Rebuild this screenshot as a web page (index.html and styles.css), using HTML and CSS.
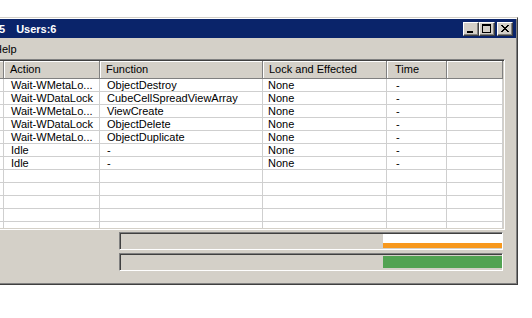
FILE: index.html
```html
<!DOCTYPE html>
<html lang="en">
<head>
    <meta charset="UTF-8">
    <title>Users:6</title>
    <link rel="stylesheet" href="styles.css">
</head>
<body>
    <div class="window">
        <div class="titlebar">
            <span class="title-count">5</span>
            <span class="title-users">Users:6</span>
            <div class="caption-buttons">
                <div class="cap-btn">
                    <svg width="14" height="12" viewBox="0 0 14 12" shape-rendering="crispEdges">
                        <rect x="3" y="8" width="6" height="2" fill="#000"/>
                    </svg>
                </div>
                <div class="cap-btn">
                    <svg width="14" height="12" viewBox="0 0 14 12" shape-rendering="crispEdges">
                        <path d="M2 1h9v9h-9z M3 3v6h7v-6z" fill="#000" fill-rule="evenodd"/>
                    </svg>
                </div>
                <div class="cap-btn cap-close">
                    <svg width="14" height="12" viewBox="0 0 14 12" shape-rendering="crispEdges">
                        <path d="M3 2h2v1h1v1h2v-1h1v-1h2v1h-1v1h-1v1h-1v1h1v1h1v1h1v1h-2v-1h-1v-1h-2v1h-1v1h-2v-1h1v-1h1v-1h1v-1h-1v-1h-1v-1h-1z" fill="#000"/>
                    </svg>
                </div>
            </div>
        </div>

        <div class="menubar">
            <span class="menu-item">Help</span>
        </div>

        <div class="listview">
            <div class="lv-header">
                <div class="lv-col"></div>
                <div class="lv-col">Action</div>
                <div class="lv-col">Function</div>
                <div class="lv-col">Lock and Effected</div>
                <div class="lv-col col-time">Time</div>
                <div class="lv-col"></div>
            </div>
            <div class="lv-body">
                <div class="lv-row"><div></div><div>Wait-WMetaLo...</div><div>ObjectDestroy</div><div>None</div><div class="col-time">-</div><div></div></div>
                <div class="lv-row"><div></div><div>Wait-WDataLock</div><div>CubeCellSpreadViewArray</div><div>None</div><div class="col-time">-</div><div></div></div>
                <div class="lv-row"><div></div><div>Wait-WMetaLo...</div><div>ViewCreate</div><div>None</div><div class="col-time">-</div><div></div></div>
                <div class="lv-row"><div></div><div>Wait-WDataLock</div><div>ObjectDelete</div><div>None</div><div class="col-time">-</div><div></div></div>
                <div class="lv-row"><div></div><div>Wait-WMetaLo...</div><div>ObjectDuplicate</div><div>None</div><div class="col-time">-</div><div></div></div>
                <div class="lv-row"><div></div><div>Idle</div><div>-</div><div>None</div><div class="col-time">-</div><div></div></div>
                <div class="lv-row"><div></div><div>Idle</div><div>-</div><div>None</div><div class="col-time">-</div><div></div></div>
                <div class="lv-row"><div></div><div></div><div></div><div></div><div></div><div></div></div>
                <div class="lv-row"><div></div><div></div><div></div><div></div><div></div><div></div></div>
                <div class="lv-row"><div></div><div></div><div></div><div></div><div></div><div></div></div>
                <div class="lv-row"><div></div><div></div><div></div><div></div><div></div><div></div></div>
                <div class="lv-row"><div></div><div></div><div></div><div></div><div></div><div></div></div>
            </div>
        </div>

        <div class="statusbar">
            <div class="meter meter-load"><div class="meter-fill"></div></div>
            <div class="meter meter-ok"><div class="meter-fill"></div></div>
        </div>
    </div>
</body>
</html>
```

FILE: styles.css
```css
body {
    margin: 0;
    background: #fff;
    font-family: "Liberation Sans", Arial, sans-serif;
    font-size: 11px;
    color: #000;
    overflow: hidden;
}

.window {
    box-sizing: border-box;
    width: 558px;
    height: 268px;
    margin: 17px 0 0 -40px;
    padding: 1px;
    background: #d4d0c8;
    border: 1px solid;
    border-color: #d4d0c8 #404040 #404040 #d4d0c8;
    box-shadow: inset 1px 1px #fff, inset -1px -1px #808080;
    display: flex;
    flex-direction: column;
}

/* title bar */
.titlebar {
    height: 19px;
    flex: none;
    display: flex;
    align-items: center;
    padding-left: 37px;
    background: #0a246a;
    color: #fff;
    font-weight: bold;
}

.title-users {
    margin-left: 11px;
}

.caption-buttons {
    margin-left: auto;
    margin-right: 3px;
    display: flex;
}

.cap-btn {
    box-sizing: border-box;
    width: 16px;
    height: 14px;
    background: #d4d0c8;
    border: 1px solid;
    border-color: #fff #404040 #404040 #fff;
    box-shadow: inset -1px -1px #808080;
}

.cap-btn svg {
    display: block;
}

.cap-close {
    margin-left: 2px;
}

/* menu */
.menubar {
    height: 21px;
    flex: none;
    display: flex;
    align-items: center;
    padding-left: 32px;
}

/* list view */
.listview {
    box-sizing: border-box;
    width: 543px;
    height: 171px;
    flex: none;
    padding: 1px;
    border: 1px solid;
    border-color: #808080 #fff #fff #808080;
    box-shadow: inset 1px 1px #404040, inset -1px -1px #d4d0c8;
    background: #fff;
}

.lv-header,
.lv-row {
    display: grid;
    grid-template-columns: 40px 96px 163px 124px 60px 56px;
}

.lv-header {
    height: 18px;
    background: #d4d0c8;
}

.lv-col {
    box-sizing: border-box;
    padding-left: 6px;
    line-height: 16px;
    border-right: 1px solid #808080;
    border-bottom: 1px solid #808080;
    box-shadow: inset 1px 1px #fff;
    white-space: nowrap;
}

.lv-header .col-time {
    padding-left: 8px;
}

.lv-body {
    height: 149px;
    overflow: hidden;
}

.lv-row {
    height: 13px;
    box-sizing: border-box;
    border-bottom: 1px solid #cfcfcf;
}

.lv-row > div {
    padding-left: 7px;
    line-height: 12px;
    border-right: 1px solid #cfcfcf;
    white-space: nowrap;
    overflow: hidden;
}

.lv-row > div:nth-child(4) {
    padding-left: 5px;
}

.lv-row > .col-time {
    padding-left: 9px;
}

/* status meters */
.statusbar {
    padding: 2px 0 0 157px;
    display: flex;
    flex-direction: column;
    gap: 3px;
}

.meter {
    box-sizing: border-box;
    width: 384px;
    height: 18px;
    padding: 1px 0 0 1px;
    border: 1px solid;
    border-color: #808080 #fff #fff #808080;
    box-shadow: inset 1px 1px #404040;
    display: flex;
    justify-content: flex-end;
    align-items: flex-start;
}

.meter-fill {
    width: 119px;
}

.meter-load .meter-fill {
    height: 14px;
    background: linear-gradient(#fff 0 9px, #f7981d 9px);
}

.meter-ok .meter-fill {
    height: 12px;
    margin-top: 1px;
    background: #52a352;
}
```
